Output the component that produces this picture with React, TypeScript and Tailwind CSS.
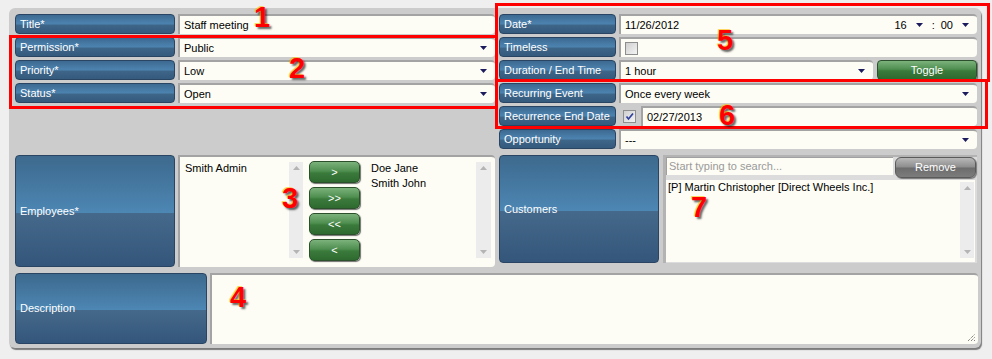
import React from 'react';

const smallLabel =
  'flex items-center pl-[4px] h-[20px] shrink-0 rounded-[4px] border border-[#2a4563] text-white text-[11px] bg-[linear-gradient(to_bottom,#3c6990_0%,#4a7fab_40%,#4c82ae_50%,#3e6689_56%,#345a7c_100%)]';
const bigLabel =
  'flex items-center pl-[4px] shrink-0 rounded-[4px] border border-[#2a4563] text-white text-[11px] bg-[linear-gradient(to_bottom,#3d698d_0%,#4d87b4_52%,#45698b_52%,#33567a_100%)]';
const inputBox =
  'h-[20px] flex items-center bg-[#fdfdf5] border-t-2 border-l-2 border-[#a3a3a3] rounded-r-[4px] pl-[4px] text-[11px] text-black';
const greenBtn =
  'flex items-center justify-center rounded-[4px] border border-[#2b502b] text-white text-[11px] bg-[linear-gradient(to_bottom,#7cb27c_0%,#4f8f50_45%,#3a7a3b_55%,#2e6a2f_100%)] shadow-[1px_1px_1px_#6f6f6f]';

function Arrow() {
  return (
    <svg width="7" height="4" viewBox="0 0 7 4" className="shrink-0">
      <polygon points="0,0 7,0 3.5,4" fill="#1b1b5e" />
    </svg>
  );
}

function Scrollbar({ h, w }: { h: string; w: string }) {
  return (
    <div className={`${h} ${w} shrink-0 flex flex-col items-center justify-between py-[4px] bg-[#ececec]`}>
      <svg width="7" height="4" viewBox="0 0 7 4">
        <polygon points="0,4 7,4 3.5,0" fill="#b4b4b4" />
      </svg>
      <svg width="7" height="4" viewBox="0 0 7 4">
        <polygon points="0,0 7,0 3.5,4" fill="#b4b4b4" />
      </svg>
    </div>
  );
}

function Checkbox({ checked }: { checked?: boolean }) {
  return (
    <div className="w-[13px] h-[13px] shrink-0 border border-[#8d8f8f] bg-[linear-gradient(135deg,#cfcfcf_0%,#f4f4f4_100%)] flex items-center justify-center">
      {checked && (
        <svg width="11" height="11" viewBox="0 0 11 11">
          <path d="M2.5 5.5 L4.5 8 L9 2.5" stroke="#2f3f9f" strokeWidth="1.7" fill="none" />
        </svg>
      )}
    </div>
  );
}

function Row({ label, labelW, children }: { label: string; labelW: string; children: React.ReactNode }) {
  return (
    <div className="flex gap-[3px]">
      <div className={`${smallLabel} ${labelW}`}>{label}</div>
      {children}
    </div>
  );
}

function Select({ value, className = 'flex-1' }: { value: string; className?: string }) {
  return (
    <div className={`${inputBox} ${className} justify-between pr-[8px]`}>
      <span>{value}</span>
      <Arrow />
    </div>
  );
}

export default function App() {
  return (
    <div className="relative w-[992px] h-[359px] bg-[#efefef] pt-[8px] pl-[9px] font-['Liberation_Sans',Arial,sans-serif] overflow-hidden">
      <div className="w-[972px] h-[340px] rounded-[6px] bg-[#cccccc] shadow-[1px_2px_1px_#7c7c7c] pl-[6px] pt-[6px] pr-[3px]">
        {/* top fields */}
        <div className="flex gap-[4px]">
          <div className="w-[480px] flex flex-col gap-[3px]">
            <Row label="Title*" labelW="w-[160px]">
              <div className={`${inputBox} flex-1`}>Staff meeting</div>
            </Row>
            <Row label="Permission*" labelW="w-[160px]">
              <Select value="Public" />
            </Row>
            <Row label="Priority*" labelW="w-[160px]">
              <Select value="Low" />
            </Row>
            <Row label="Status*" labelW="w-[160px]">
              <Select value="Open" />
            </Row>
          </div>
          <div className="w-[478px] flex flex-col gap-[3px]">
            <Row label="Date*" labelW="w-[117px]">
              <div className={`${inputBox} flex-1 justify-between pr-[8px]`}>
                <span>11/26/2012</span>
                <div className="flex items-center">
                  <span>16</span>
                  <span className="ml-[9px]"><Arrow /></span>
                  <span className="ml-[9px]">:</span>
                  <span className="ml-[6px]">00</span>
                  <span className="ml-[9px]"><Arrow /></span>
                </div>
              </div>
            </Row>
            <Row label="Timeless" labelW="w-[117px]">
              <div className={`${inputBox} flex-1`}>
                <Checkbox />
              </div>
            </Row>
            <Row label="Duration / End Time" labelW="w-[117px]">
              <div className="flex-1 flex gap-[4px]">
                <Select value="1 hour" className="w-[254px]" />
                <div className={`${greenBtn} w-[100px] h-[20px]`}>Toggle</div>
              </div>
            </Row>
            <Row label="Recurring Event" labelW="w-[117px]">
              <Select value="Once every week" />
            </Row>
            <Row label="Recurrence End Date" labelW="w-[117px]">
              <div className="flex-1 flex items-center">
                <div className="w-[22px] h-[20px] flex items-center pl-[4px]">
                  <Checkbox checked />
                </div>
                <div className={`${inputBox} flex-1`}>02/27/2013</div>
              </div>
            </Row>
            <Row label="Opportunity" labelW="w-[117px]">
              <Select value="---" />
            </Row>
          </div>
        </div>

        {/* employees / customers */}
        <div className="flex gap-[4px] mt-[6px]">
          <div className="w-[480px] flex gap-[3px]">
            <div className={`${bigLabel} w-[160px] h-[112px]`}>Employees*</div>
            <div className="w-[317px] h-[112px] bg-[#fdfdf5] border-t-2 border-l-2 border-[#a3a3a3] rounded-r-[4px] flex pt-[5px] pl-[5px] text-[11px] leading-[15px]">
              <div className="w-[104px] -mt-[1px]">Smith Admin</div>
              <Scrollbar h="h-[96px]" w="w-[14px]" />
              <div className="ml-[6px] -mt-[1px] flex flex-col gap-[4px]">
                {['>', '>>', '<<', '<'].map((t) => (
                  <div key={t} className={`${greenBtn} w-[51px] h-[22px] rounded-[5px]`}>
                    {t}
                  </div>
                ))}
              </div>
              <div className="ml-[11px] w-[105px] -mt-[1px]">
                <div>Doe Jane</div>
                <div>Smith John</div>
              </div>
              <Scrollbar h="h-[96px]" w="w-[15px]" />
            </div>
          </div>
          <div className="w-[478px] flex gap-[4px]">
            <div className={`${bigLabel} w-[160px] h-[108px]`}>Customers</div>
            <div className="w-[314px] h-[108px] bg-[#dcdcdc] border-l-[3px] border-t-[2px] border-[#b3b3b3] flex flex-col">
              <div className="flex gap-[2px] items-start">
                <div className="w-[227px] h-[18px] bg-[#fdfdf5] border-l border-t border-[#a0a0a0] pl-[2px] flex items-center text-[11px] text-[#9a9a9a]">
                  Start typing to search...
                </div>
                <div className="w-[81px] h-[21px] rounded-[6px] border border-[#5a5a5a] flex items-center justify-center text-white text-[11px] bg-[linear-gradient(to_bottom,#b8b8b8_0%,#8d8d8d_48%,#6c6c6c_52%,#7c7c7c_100%)] shadow-[1px_1px_1px_#777]">
                  Remove
                </div>
              </div>
              <div className="mt-[2px] w-[309px] h-[82px] bg-[#fdfdf5] flex pl-[2px] text-[11px] leading-[15px]">
                <div className="flex-1">[P] Martin Christopher [Direct Wheels Inc.]</div>
                <div className="mt-[2px] mr-[1px]">
                  <Scrollbar h="h-[76px]" w="w-[14px]" />
                </div>
              </div>
            </div>
          </div>
        </div>

        {/* description */}
        <div className="flex gap-[3px] mt-[6px]">
          <div className={`${bigLabel} w-[192px] h-[71px]`}>Description</div>
          <div className="relative w-[768px] h-[71px] bg-[#fdfdf5] border-t-2 border-l-2 border-[#a3a3a3] rounded-r-[4px]">
            <svg width="9" height="9" viewBox="0 0 9 9" className="absolute right-[2px] bottom-[2px]">
              <path d="M1 8 L8 1 M4 8 L8 4 M7 8 L8 7" stroke="#555" strokeWidth="1" strokeDasharray="1 1" />
            </svg>
          </div>
        </div>
      </div>

      {/* annotation boxes */}
      <div className="absolute left-[9px] top-[35px] w-[489px] h-[74px] border-[3px] border-[#ff0000]" />
      <div className="absolute left-[495px] top-[3px] w-[495px] h-[79px] border-[3px] border-[#ff0000]" />
      <div className="absolute left-[495px] top-[79px] w-[493px] h-[50px] border-[3px] border-[#ff0000]" />

      {/* annotation numbers */}
      {[
        { n: '1', cls: 'left-[254px] top-[3px]' },
        { n: '2', cls: 'left-[289px] top-[54px]' },
        { n: '3', cls: 'left-[282px] top-[184px]' },
        { n: '4', cls: 'left-[230px] top-[283px]' },
        { n: '5', cls: 'left-[717px] top-[26px]' },
        { n: '6', cls: 'left-[719px] top-[101px]' },
        { n: '7', cls: 'left-[691px] top-[193px]' },
      ].map((a) => (
        <span
          key={a.n}
          className={`absolute ${a.cls} text-[29px] leading-none font-bold text-[#ff0000] [text-shadow:-1px_-1px_0_rgba(255,190,0,0.6),2px_2px_2px_rgba(0,0,0,0.6)]`}
        >
          {a.n}
        </span>
      ))}
    </div>
  );
}
